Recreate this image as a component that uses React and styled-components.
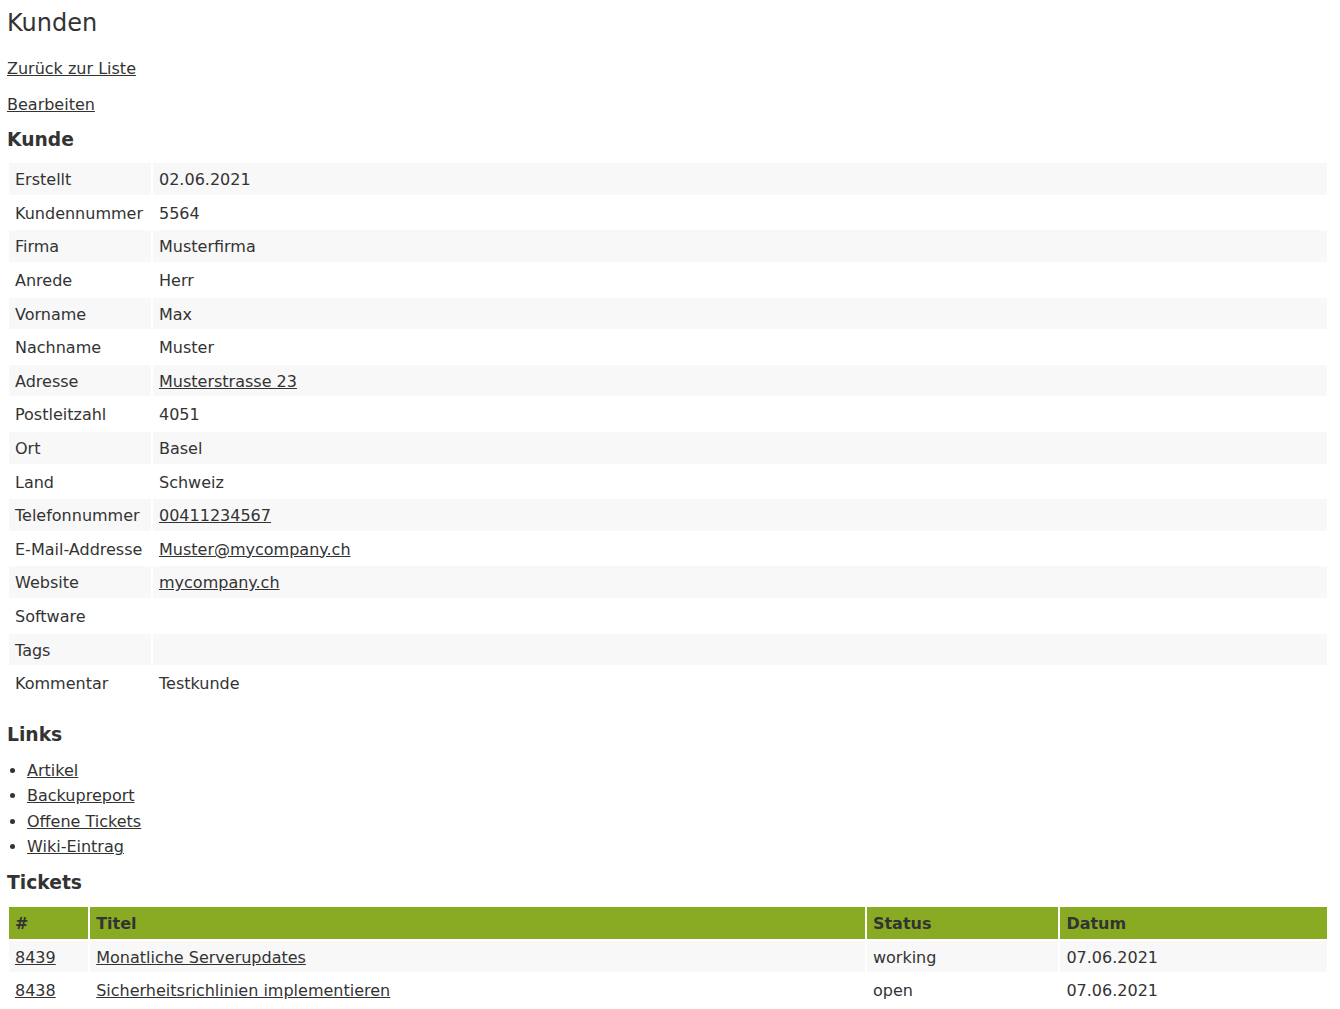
import React from "react";
import styled, { createGlobalStyle } from "styled-components";

const GlobalStyle = createGlobalStyle`
  html, body {
    margin: 0;
    padding: 0;
    background: #fff;
  }
  body {
    font-family: "DejaVu Sans", Verdana, sans-serif;
    font-size: 16px;
    line-height: 1.6;
    color: #333;
  }
`;

const customer = [
  ["Erstellt", "02.06.2021"],
  ["Kundennummer", "5564"],
  ["Firma", "Musterfirma"],
  ["Anrede", "Herr"],
  ["Vorname", "Max"],
  ["Nachname", "Muster"],
  ["Adresse", "Musterstrasse 23", true],
  ["Postleitzahl", "4051"],
  ["Ort", "Basel"],
  ["Land", "Schweiz"],
  ["Telefonnummer", "00411234567", true],
  ["E-Mail-Addresse", "Muster@mycompany.ch", true],
  ["Website", "mycompany.ch", true],
  ["Software", ""],
  ["Tags", ""],
  ["Kommentar", "Testkunde"],
];

const links = ["Artikel", "Backupreport", "Offene Tickets", "Wiki-Eintrag"];

const tickets = [
  { id: "8439", title: "Monatliche Serverupdates", status: "working", date: "07.06.2021" },
  { id: "8438", title: "Sicherheitsrichlinien implementieren", status: "open", date: "07.06.2021" },
];

export default function App() {
  return (
    <Page>
      <GlobalStyle />
      <Title>Kunden</Title>
      <Para $top={14}>
        <Link href="#">Zurück zur Liste</Link>
      </Para>
      <Para $top={10}>
        <Link href="#">Bearbeiten</Link>
      </Para>

      <Heading $top={8}>Kunde</Heading>
      <DataTable $top={6}>
        <tbody>
          {customer.map(([label, value, isLink]) => (
            <Row key={label}>
              <LabelCell>{label}</LabelCell>
              <Cell>{isLink ? <Link href="#">{value}</Link> : value}</Cell>
            </Row>
          ))}
        </tbody>
      </DataTable>

      <Heading $top={19}>Links</Heading>
      <LinkList>
        {links.map((l) => (
          <Item key={l}>
            <Link href="#">{l}</Link>
          </Item>
        ))}
      </LinkList>

      <Heading $top={8}>Tickets</Heading>
      <DataTable $top={7} $fixed>
        <thead>
          <tr>
            <HeadCell $w={79}>#</HeadCell>
            <HeadCell $w={773}>Titel</HeadCell>
            <HeadCell $w={191}>Status</HeadCell>
            <HeadCell $w={266}>Datum</HeadCell>
          </tr>
        </thead>
        <tbody>
          {tickets.map((t) => (
            <Row key={t.id}>
              <Cell><Link href="#">{t.id}</Link></Cell>
              <Cell><Link href="#">{t.title}</Link></Cell>
              <Cell>{t.status}</Cell>
              <Cell>{t.date}</Cell>
            </Row>
          ))}
        </tbody>
      </DataTable>
    </Page>
  );
}

const Page = styled.div`
  padding: 0 11px 4px 7px;
`;

const Title = styled.h1`
  font-size: 24px;
  font-weight: normal;
  line-height: 38px;
  margin: 4px 0 0;
`;

const Para = styled.p`
  margin: ${(p) => p.$top}px 0 0;
`;

const Link = styled.a`
  color: #333;
  text-decoration: underline;
`;

const Heading = styled.h3`
  font-size: 18.72px;
  font-weight: bold;
  line-height: 30px;
  margin: ${(p) => p.$top}px 0 0;
`;

const DataTable = styled.table`
  width: 100%;
  margin-top: ${(p) => p.$top}px;
  border-collapse: separate;
  border-spacing: 2px;
  table-layout: ${(p) => (p.$fixed ? "fixed" : "auto")};
`;

const Row = styled.tr`
  &:nth-child(odd) td {
    background: #f8f8f8;
  }
`;

const Cell = styled.td`
  padding: 5px 6px 2px;
  line-height: 24.6px;
  text-align: left;
  vertical-align: middle;
`;

const LabelCell = styled(Cell)`
  width: 142px;
  box-sizing: border-box;
  white-space: nowrap;
`;

const HeadCell = styled.th`
  width: ${(p) => p.$w}px;
  box-sizing: border-box;
  padding: 4px 6px 2px;
  text-align: left;
  background: #89ab23;
  font-weight: bold;
`;

const LinkList = styled.ul`
  margin: 8px 0 0;
  padding-left: 20px;
`;

const Item = styled.li`
  line-height: 25.6px;
`;
